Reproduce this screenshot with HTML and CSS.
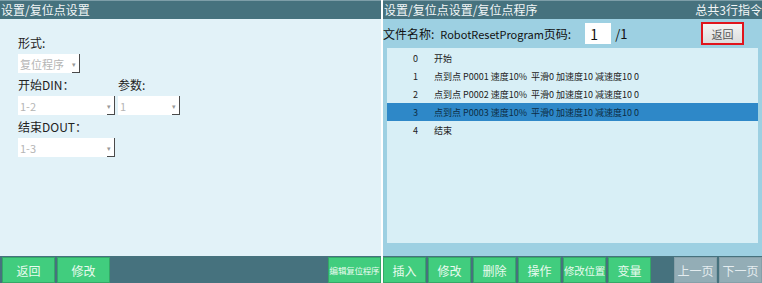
FILE: index.html
```html
<!DOCTYPE html>
<html lang="zh-CN">
<head>
  <meta charset="UTF-8">
  <title>复位点设置</title>
  <link rel="stylesheet" href="styles.css">
</head>
<body>

<div class="screen">
  <div class="panel left">
    <div class="title-bar">
      <span>设置/复位点设置</span>
    </div>
    <div class="panel-body">
      <div class="field">
        <label>形式:</label>
        <div class="combo short"><span>复位程序</span><i>▾</i></div>
      </div>
      <div class="field-row">
        <div class="field">
          <label>开始DIN：</label>
          <div class="combo wide"><span>1-2</span><i>▾</i></div>
        </div>
        <div class="field">
          <label>参数:</label>
          <div class="combo short"><span>1</span><i>▾</i></div>
        </div>
      </div>
      <div class="field">
        <label>结束DOUT：</label>
        <div class="combo wide"><span>1-3</span><i>▾</i></div>
      </div>
    </div>
    <div class="bottom-bar">
      <button class="btn">返回</button>
      <button class="btn">修改</button>
      <span class="spacer"></span>
      <button class="btn tiny-text">编辑复位程序</button>
    </div>
  </div>

  <div class="divider"></div>

  <div class="panel right">
    <div class="title-bar">
      <span>设置/复位点设置/复位点程序</span>
      <span>总共3行指令</span>
    </div>
    <div class="toolbar">
      <span class="file-name">文件名称:<span class="latin">RobotResetProgram</span>页码:</span>
      <input class="page-input" type="text" value="1">
      <span class="page-total">/1</span>
      <span class="spacer"></span>
      <button class="back-btn">返回</button>
    </div>
    <div class="program-list">
      <div class="row"><span class="num">0</span><span>开始</span></div>
      <div class="row"><span class="num">1</span><span>点到点 P0001 速度10%&nbsp; 平滑0 加速度10 减速度10 0</span></div>
      <div class="row"><span class="num">2</span><span>点到点 P0002 速度10%&nbsp; 平滑0 加速度10 减速度10 0</span></div>
      <div class="row selected"><span class="num">3</span><span>点到点 P0003 速度10%&nbsp; 平滑0 加速度10 减速度10 0</span></div>
      <div class="row"><span class="num">4</span><span>结束</span></div>
    </div>
    <div class="bottom-bar">
      <button class="btn">插入</button>
      <button class="btn">修改</button>
      <button class="btn">删除</button>
      <button class="btn">操作</button>
      <button class="btn small-text">修改位置</button>
      <button class="btn">变量</button>
      <span class="spacer"></span>
      <button class="btn grey">上一页</button>
      <button class="btn grey">下一页</button>
    </div>
  </div>
</div>

</body>
</html>
```

FILE: styles.css
```css
body {
  margin: 0;
  font-family: "Noto Sans CJK SC", "Noto Sans", sans-serif;
  background-color: #ffffff;
}
.screen {
  display: flex;
  width: 762px;
  height: 283px;
  overflow: hidden;
}
.panel {
  display: flex;
  flex-direction: column;
  height: 283px;
}
.panel.left {
  width: 381px;
  background-color: #e2f2f8;
}
.panel.right {
  width: 379px;
  background-color: #9dd0e2;
}
.divider {
  width: 2px;
  background-color: #ffffff;
}
.title-bar {
  display: flex;
  justify-content: space-between;
  align-items: center;
  height: 19px;
  border-top: 1px solid #7d9ea8;
  box-sizing: border-box;
  background-color: #46727e;
  color: #f2f6f7;
  font-size: 12px;
  line-height: 18px;
  padding: 0 0 0 1px;
  white-space: nowrap;
}
.panel-body {
  flex: 1;
  padding: 16px 0 0 18px;
}
.field label {
  display: block;
  font-size: 12px;
  line-height: 16px;
  color: #222;
  height: 16px;
  margin-bottom: 3px;
}
.field-row {
  display: flex;
  gap: 3px;
}
.combo {
  position: relative;
  display: flex;
  align-items: center;
  justify-content: space-between;
  height: 19px;
  background-color: #ffffff;
  border-right: 1px solid #4a4a4a;
  box-sizing: border-box;
  color: #b5b5b5;
  font-size: 11px;
  padding: 0 3px 0 2px;
  margin-bottom: 4px;
}
.combo::after {
  content: "";
  position: absolute;
  right: -1px;
  bottom: 0;
  width: 8px;
  height: 1px;
  background-color: #4a4a4a;
}
.combo i {
  font-style: normal;
  font-size: 7px;
  color: #999;
}
.combo.short {
  width: 62px;
}
.combo.wide {
  width: 97px;
}
.bottom-bar {
  display: flex;
  gap: 2px;
  height: 27px;
  padding: 1px 0 0 2px;
  box-sizing: border-box;
  background-color: #46727e;
}
.right .bottom-bar {
  padding-left: 0;
}
.spacer {
  flex: 1;
}
.btn {
  width: 53px;
  height: 26px;
  border: 1px solid #34a867;
  background-color: #41cd7e;
  color: #e9fbef;
  font-family: inherit;
  font-size: 12px;
  padding: 0;
  white-space: nowrap;
  overflow: hidden;
  cursor: pointer;
}
.btn.small-text {
  font-size: 10.5px;
  letter-spacing: -0.3px;
}
.btn.tiny-text {
  font-size: 8.5px;
  letter-spacing: -0.2px;
}
.right .btn {
  width: 43px;
}
.btn.grey {
  background-color: #93adb6;
  border-color: #86a0a9;
  color: #e4ecef;
}
.toolbar {
  display: flex;
  align-items: center;
  height: 29px;
  padding: 0 18px 0 0;
  color: #111;
  font-size: 12px;
  white-space: nowrap;
}
.toolbar .latin {
  font-size: 11px;
  margin-left: 6px;
}
.page-input {
  width: 26px;
  height: 21px;
  box-sizing: border-box;
  border: none;
  margin-left: 14px;
  padding: 0 0 0 5px;
  font-family: inherit;
  font-size: 14px;
  color: #111;
}
.page-total {
  margin-left: 4px;
  font-size: 13px;
}
.back-btn {
  width: 43px;
  height: 23px;
  border: 2px solid #e0141c;
  background: linear-gradient(#f4f4f4, #dcdcdc);
  color: #555;
  font-family: inherit;
  font-size: 11px;
  padding: 0;
}
.program-list {
  flex: 1;
  margin: 0 4px 13px 4px;
  padding-top: 1px;
  background-color: #d8eff6;
}
.row {
  display: flex;
  height: 18px;
  align-items: center;
  font-size: 9px;
  color: #222;
}
.row .num {
  width: 47px;
  padding-left: 26px;
  box-sizing: border-box;
}
.row.selected {
  background-color: #2e88c8;
  color: #0d2d44;
}
```
